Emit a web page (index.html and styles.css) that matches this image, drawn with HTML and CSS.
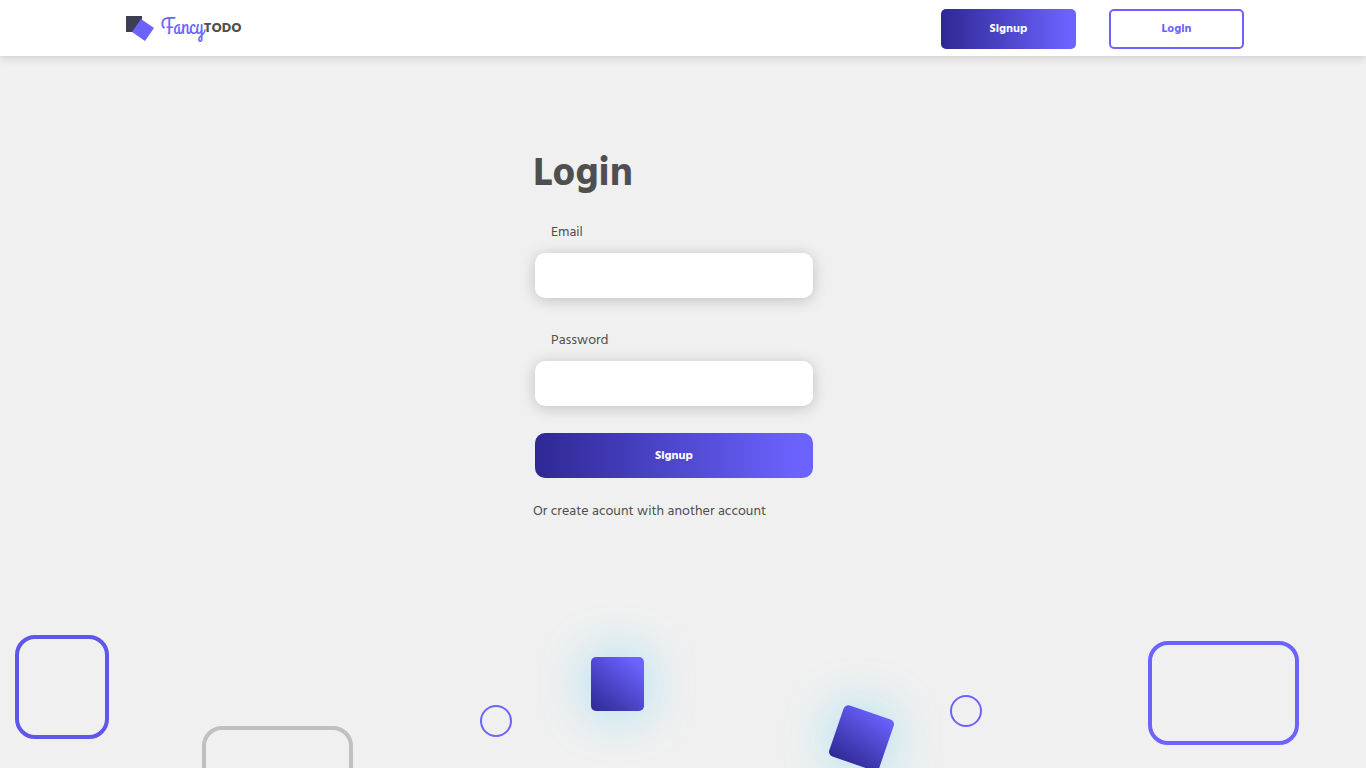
FILE: index.html
```html
<!DOCTYPE html>
<html lang="en">
<head>
  <meta charset="utf-8">
  <meta name="viewport" content="width=device-width, initial-scale=1">
  <title>FancyTODO - Login</title>
  <link rel="stylesheet" href="styles.css">
</head>
<body>
  <header class="navbar">
    <a class="brand" href="#">
      <svg class="brand-mark" viewBox="0 0 28 26" aria-hidden="true">
        <path d="M0 0H16V16H0Z" fill="#3f3d56"/>
        <path d="M15 3L28 12L19 25L6 16Z" fill="#6c63ff"/>
      </svg>
      <span class="brand-name"><span class="brand-script">Fancy</span><span class="brand-caps">TODO</span></span>
    </a>
    <nav class="nav-actions">
      <button class="btn btn-primary" type="button">Signup</button>
      <button class="btn btn-outline" type="button">Login</button>
    </nav>
  </header>
  <main class="page">
    <form class="login-form">
      <h1 class="title">Login</h1>
      <label class="label" for="email">Email</label>
      <input class="field" id="email" type="email">
      <label class="label" for="password">Password</label>
      <input class="field" id="password" type="password">
      <button class="btn-submit" type="submit">Signup</button>
      <p class="note">Or create acount with another account</p>
    </form>
    <div class="shapes" aria-hidden="true">
      <span class="frame frame-left"></span>
      <span class="frame frame-grey"></span>
      <span class="ring ring-left"></span>
      <span class="cube cube-straight"></span>
      <span class="cube cube-tilted"></span>
      <span class="ring ring-right"></span>
      <span class="frame frame-right"></span>
    </div>
  </main>
</body>
</html>
```
FILE: styles.css
```css
* {
  box-sizing: border-box;
}

body {
  margin: 0;
  min-height: 100vh;
  display: flex;
  flex-direction: column;
  background: #f0f0f0;
  color: #4f4f4f;
  font-family: "Hind", "Noto Sans", "Open Sans", sans-serif;
}

.navbar {
  position: relative;
  z-index: 1;
  display: flex;
  align-items: center;
  justify-content: space-between;
  height: 56px;
  padding: 2px 122px 0 126px;
  background: #fff;
  box-shadow: 0 2px 8px rgba(0, 0, 0, 0.15);
}

.brand {
  display: flex;
  align-items: center;
  gap: 7px;
  color: inherit;
  text-decoration: none;
}

.brand-mark {
  width: 28px;
  height: 26px;
}

.brand-name {
  display: flex;
  align-items: center;
  line-height: 24px;
}

.brand-script {
  padding-bottom: 4px;
  color: #6c63ff;
  font-family: "Grand Hotel", "Lobster Two", "Liberation Serif", cursive;
  font-size: 22px;
}

.brand-caps {
  font-size: 14px;
  font-weight: 700;
}

.nav-actions {
  display: flex;
  gap: 33px;
}

.btn,
.btn-submit {
  padding: 0;
  border: 0;
  color: #fff;
  background: linear-gradient(90deg, #2e2894, #6c63ff 95%);
  font-family: inherit;
  font-size: 12px;
  font-weight: 700;
  cursor: pointer;
}

.btn {
  width: 135px;
  height: 40px;
  border-radius: 5px;
}

.btn-outline {
  border: 2px solid #6c63ff;
  background: #fff;
  color: #6c63ff;
}

.page {
  position: relative;
  flex: 1;
  overflow: hidden;
  padding: 91px 16px 240px;
}

.login-form {
  position: relative;
  z-index: 1;
  display: flex;
  flex-direction: column;
  max-width: 300px;
  margin: 0 auto;
}

.title {
  margin: 0 0 19px;
  font-size: 40px;
  font-weight: 700;
  line-height: 56px;
}

.label {
  margin: 0 18px 9px;
  font-size: 14px;
  line-height: 22px;
}

.field,
.btn-submit {
  height: 45px;
  margin: 0 20px 0 2px;
  border-radius: 10px;
}

.field {
  margin-bottom: 32px;
  padding: 0 16px;
  border: 0;
  background: #fff;
  box-shadow: 0 2px 15px rgba(0, 0, 0, 0.2);
  color: inherit;
  font-family: inherit;
  font-size: 14px;
}

.btn-submit {
  margin-top: -5px;
}

.note {
  margin: 23px 0 0;
  font-size: 14px;
  line-height: 22px;
}

.shapes span {
  position: absolute;
}

.frame {
  width: 151px;
  height: 104px;
  border: 4px solid #6c63ff;
  border-radius: 20px;
}

.frame-left {
  left: 15px;
  bottom: 29px;
  width: 94px;
  border-color: #5f56eb;
}

.frame-grey {
  left: 202px;
  bottom: -62px;
  border-color: #c0c0c0;
}

.frame-right {
  right: 67px;
  bottom: 23px;
}

.ring {
  width: 32px;
  height: 32px;
  border: 2px solid #6c63ff;
  border-radius: 50%;
}

.ring-left {
  left: 480px;
  bottom: 31px;
}

.ring-right {
  left: 950px;
  bottom: 41px;
}

.cube {
  width: 53px;
  height: 54px;
  border-radius: 5px;
  background: linear-gradient(40deg, #2e2894, #6c63ff 90%);
  box-shadow: 0 0 50px rgba(0, 195, 255, 0.35);
}

.cube-straight {
  left: 591px;
  bottom: 57px;
}

.cube-tilted {
  left: 835px;
  bottom: 3px;
  background: linear-gradient(15deg, #2e2894, #6c63ff);
  transform: rotate(19deg);
}
```
